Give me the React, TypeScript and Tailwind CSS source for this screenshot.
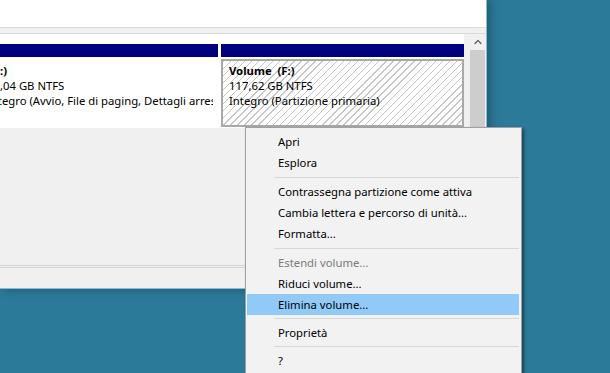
import { ChevronUp } from 'lucide-react';

type MenuEntry = { label: string; disabled?: boolean; active?: boolean } | { sep: 7 | 8 };

const MENU: MenuEntry[] = [
  { label: 'Apri' },
  { label: 'Esplora' },
  { sep: 8 },
  { label: 'Contrassegna partizione come attiva' },
  { label: 'Cambia lettera e percorso di unità...' },
  { label: 'Formatta...' },
  { sep: 8 },
  { label: 'Estendi volume...', disabled: true },
  { label: 'Riduci volume...' },
  { label: 'Elimina volume...', active: true },
  { sep: 7 },
  { label: 'Proprietà' },
  { sep: 7 },
  { label: '?' },
];

function ContextMenu() {
  return (
    <div className="absolute left-[245px] top-[127px] w-[277px] h-[260px] bg-[#f2f2f2] border border-[#a0a0a0] pt-[3px] pl-[1px] pr-[2px] shadow-[2px_2px_3px_rgba(0,0,0,0.45)]">
      {MENU.map((item, i) =>
        'sep' in item ? (
          <div key={i} className={`${item.sep === 8 ? 'h-[8px]' : 'h-[7px]'} flex items-center pl-[27px]`}>
            <div className="h-px w-full bg-[#d7d7d7]" />
          </div>
        ) : (
          <div
            key={i}
            className={`h-[21px] flex items-center pl-[31px] leading-none ${
              item.active ? 'bg-[#91c9f7]' : ''
            } ${item.disabled ? 'text-[#7a7a7a]' : 'text-black'}`}
          >
            {item.label}
          </div>
        ),
      )}
    </div>
  );
}

export default function App() {
  return (
    <div className="relative w-[610px] h-[373px] overflow-hidden bg-[#2c7a99] font-['Noto_Sans',sans-serif] text-[11.3px] text-black">
      {/* ─── Window ─── */}
      <div className="w-[487px] h-[289px] flex flex-col bg-[#f0f0f0] border-r border-b border-[#86bcdc] shadow-[3px_0_10px_rgba(0,0,0,0.3)]">
        {/* top list pane */}
        <div className="h-[27px] bg-white" />
        {/* splitter */}
        <div className="h-[7px] bg-[#f0f0f0] border-t border-b border-[#dadada]" />

        {/* graphical disk pane */}
        <div className="flex h-[94px]">
          <div className="flex-1 bg-white pt-[10px] flex gap-[3px]">
            {/* partition C: (scrolled off to the left) */}
            <div className="w-[218px] flex flex-col">
              <div className="h-[13px] bg-[#000080]" />
              <div className="w-[213px] h-[70px] overflow-hidden pt-[6px] leading-[15px] whitespace-nowrap">
                <div className="font-bold -ml-[11px]">(C:)</div>
                <div>,04 GB NTFS</div>
                <div className="-ml-[13px]">Integro (Avvio, File di paging, Dettagli arresto anomalo, Partizione primaria)</div>
              </div>
            </div>
            {/* partition F: */}
            <div className="w-[243px] flex flex-col">
              <div className="h-[13px] bg-[#000080]" />
              <div className="h-[68px] mt-[2px] border-2 border-[#a9a9a9] bg-[repeating-linear-gradient(135deg,#c6c6c6_0px,#c6c6c6_1px,#ffffff_1px,#ffffff_5px)] pt-[2px] pl-[6px] leading-[15px] whitespace-nowrap">
                <div className="font-bold whitespace-pre">Volume  (F:)</div>
                <div>117,62 GB NTFS</div>
                <div>Integro (Partizione primaria)</div>
              </div>
            </div>
          </div>
          {/* vertical scrollbar */}
          <div className="w-[17px] ml-[5px] bg-[#f0f0f0] flex flex-col">
            <div className="h-[16px] flex items-center justify-center">
              <ChevronUp size={12} strokeWidth={2.5} className="text-[#606060]" />
            </div>
            <div className="flex-1 mx-[1px] bg-[#cdcdcd]" />
          </div>
        </div>

        <div className="flex-1" />
        <div className="h-[3px] border-t border-b border-[#d5d5d5]" />
        <div className="h-[20px]" />
      </div>

      <ContextMenu />
    </div>
  );
}
